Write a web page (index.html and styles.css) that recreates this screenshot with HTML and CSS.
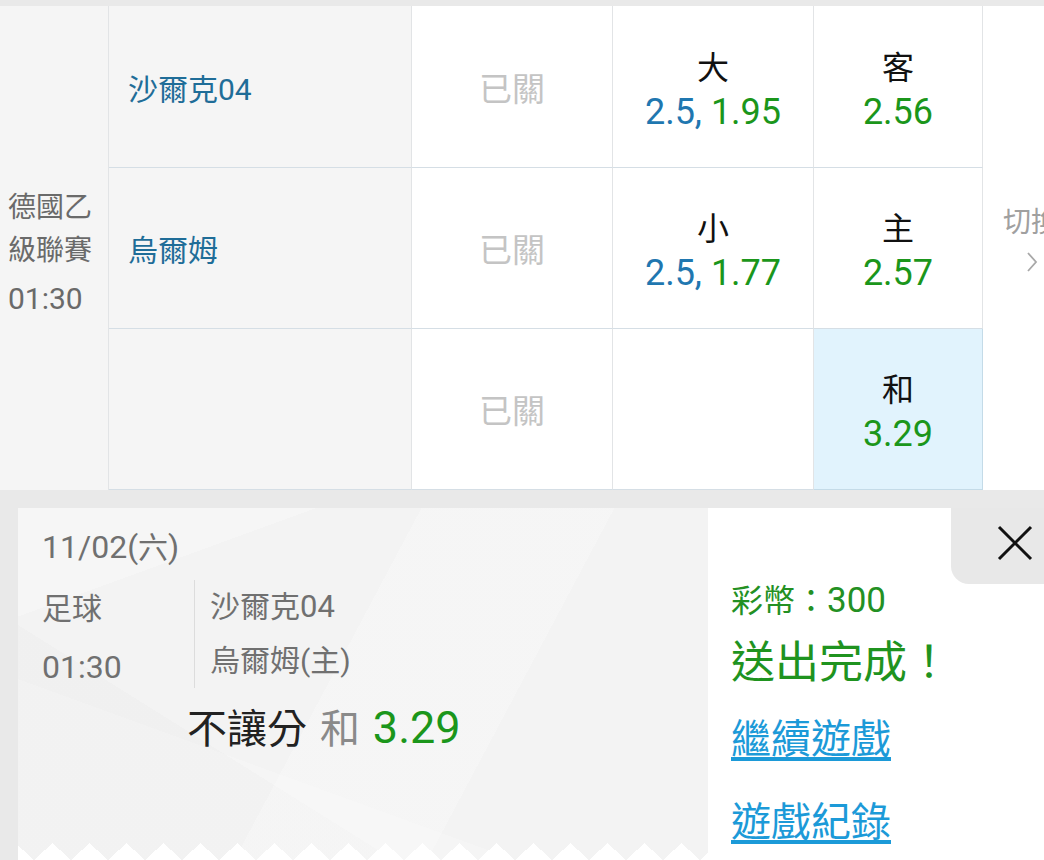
FILE: index.html
```html
<!DOCTYPE html>
<html lang="zh-Hant">
<head>
  <meta charset="UTF-8" />
  <meta name="viewport" content="width=device-width, initial-scale=1.0"/>
  <title>投注</title>
  <link rel="stylesheet" href="styles.css">
</head>
<body>

  <!-- Odds Board -->
  <div class="board">
    <div class="cell league">
      <div class="league-name">德國乙<br>級聯賽</div>
      <div class="league-time">01:30</div>
    </div>

    <div class="cell switch">
      <div>切換</div>
      <svg class="chev" width="14" height="22" viewBox="0 0 14 22">
        <polyline points="3,2 11,11 3,20" fill="none" stroke="#a8a8a8" stroke-width="1.8"/>
      </svg>
    </div>

    <!-- row 1 -->
    <div class="cell team">沙爾克04</div>
    <div class="cell closed">已關</div>
    <div class="cell odds">
      <div class="label">大</div>
      <div class="value"><span class="blue">2.5,</span> 1.95</div>
    </div>
    <div class="cell odds">
      <div class="label">客</div>
      <div class="value">2.56</div>
    </div>

    <!-- row 2 -->
    <div class="cell team">烏爾姆</div>
    <div class="cell closed">已關</div>
    <div class="cell odds">
      <div class="label">小</div>
      <div class="value"><span class="blue">2.5,</span> 1.77</div>
    </div>
    <div class="cell odds">
      <div class="label">主</div>
      <div class="value">2.57</div>
    </div>

    <!-- row 3 -->
    <div class="cell team"></div>
    <div class="cell closed">已關</div>
    <div class="cell odds"></div>
    <div class="cell odds picked">
      <div class="label">和</div>
      <div class="value">3.29</div>
    </div>
  </div>

  <!-- Bet Slip -->
  <div class="slip">
    <div class="ticket">
      <div class="date"><span class="num">11/02(</span>六<span class="num">)</span></div>
      <div class="match">
        <div class="match-info">
          <div>足球</div>
          <div class="num">01:30</div>
        </div>
        <div class="match-teams">
          <div>沙爾克<span class="num">04</span></div>
          <div>烏爾姆(主)</div>
        </div>
      </div>
      <div class="bet">不讓分 <span class="pick">和</span> <span class="green">3.29</span></div>
    </div>

    <div class="result">
      <div class="coins">彩幣：<span class="amount">300</span></div>
      <div class="done">送出完成！</div>
      <a class="link first" href="#">繼續遊戲</a>
      <a class="link" href="#">遊戲紀錄</a>
    </div>

    <div class="close">
      <svg width="36" height="36" viewBox="0 0 36 36">
        <path d="M2 2 L34 34 M34 2 L2 34" stroke="#111" stroke-width="3"/>
      </svg>
    </div>
  </div>

</body>
</html>
```

FILE: styles.css
```css
html, body {
  margin: 0;
  padding: 0;
  height: 860px;
  overflow: hidden;
}

body {
  font-family: Roboto, "Noto Sans CJK TC", sans-serif;
  background-color: #e9e9e9;
  color: #222;
}

.board {
  margin-top: 6px;
  width: 1103px;
  display: grid;
  grid-template-columns: 109px 303px 201px 201px 169px 120px;
  grid-template-rows: 162px 161px 161px;
  background-color: #fff;
}

.cell {
  box-sizing: border-box;
  border-right: 1px solid #e2e4e6;
  border-bottom: 1px solid #d5dee5;
  display: flex;
  align-items: center;
}

.league {
  grid-column: 1;
  grid-row: 1 / span 3;
  background-color: #f5f5f5;
  border-bottom: none;
  flex-direction: column;
  align-items: flex-start;
  justify-content: center;
  padding: 14px 0 0 8px;
  color: #6a6a6a;
}

.league-name {
  font-size: 28px;
  line-height: 43px;
}

.league-time {
  font-size: 30px;
  line-height: 50px;
  margin-top: 2px;
}

.switch {
  grid-column: 6;
  grid-row: 1 / span 3;
  border: none;
  flex-direction: column;
  align-items: flex-start;
  justify-content: center;
  padding: 0 0 20px 20px;
  color: #a0a0a0;
  font-size: 28px;
  line-height: 40px;
}

.chev {
  margin: 8px 0 0 22px;
}

.team {
  background-color: #f5f5f5;
  padding-left: 19px;
  color: #1f6d98;
  font-size: 30px;
}

.closed {
  justify-content: center;
  color: #c4c4c4;
  font-size: 33px;
}

.odds {
  flex-direction: column;
  justify-content: center;
  padding-top: 6px;
  line-height: 44px;
}

.odds .label {
  color: #111;
  font-size: 32px;
}

.odds .value {
  color: #1b961b;
  font-size: 36px;
}

.blue {
  color: #1f77b0;
}

.picked {
  background-color: #e1f3fd;
  border: 1px solid #c4dbe8;
  border-left: none;
  border-top: none;
}

/* bet slip */
.slip {
  position: relative;
  margin: 18px 0 0 18px;
  height: 352px;
  display: flex;
  background-color: #fff;
}

.ticket {
  position: relative;
  box-sizing: border-box;
  width: 690px;
  padding: 19px 0 0 24px;
  color: #707070;
  font-size: 30px;
  background-color: #f3f3f3;
  background-image:
    linear-gradient(118deg, rgba(255,255,255,0) 46%, rgba(255,255,255,0.22) 46%, rgba(255,255,255,0.22) 68%, rgba(255,255,255,0) 68%),
    linear-gradient(32deg, rgba(0,0,0,0.012) 30%, rgba(255,255,255,0) 30%),
    linear-gradient(160deg, rgba(255,255,255,0.28) 18%, rgba(255,255,255,0) 18%),
    linear-gradient(200deg, rgba(255,255,255,0) 70%, rgba(255,255,255,0.2) 70%);
}

.ticket::after {
  content: "";
  position: absolute;
  left: 0;
  right: 0;
  bottom: 0;
  height: 17px;
  background: conic-gradient(from 133deg at 50% 0, #fff 94deg, rgba(255,255,255,0) 0) 16px 0 / 37px 17px repeat-x;
}

.num {
  font-size: 32px;
}

.date {
  line-height: 40px;
}

.match {
  display: flex;
  margin-top: 12px;
}

.match-info {
  width: 152px;
  line-height: 58px;
}

.match-teams {
  border-left: 1px solid #dcdcdc;
  padding-left: 15px;
  line-height: 54px;
  height: 108px;
}

.match-teams .num {
  font-size: 31px;
}

.bet {
  margin: 7px 0 0 145px;
  font-size: 40px;
  line-height: 50px;
  color: #222;
  word-spacing: 3px;
}

.pick {
  color: #8a8a8a;
}

.green {
  color: #1b961b;
  font-size: 45px;
}

.result {
  flex: 1;
  padding: 71px 0 0 23px;
}

.coins {
  color: #239023;
  font-size: 32px;
  line-height: 44px;
}

.amount {
  font-size: 35px;
}

.done {
  margin-top: 10px;
  color: #1f931f;
  font-size: 44px;
  line-height: 60px;
}

.link {
  display: table;
  margin-top: 27px;
  color: #1c9ad8;
  font-size: 40px;
  line-height: 56px;
  text-decoration: underline;
  text-decoration-thickness: 4px;
  text-underline-offset: 4px;
}

.link.first {
  margin-top: 19px;
}

.close {
  position: absolute;
  top: 0;
  right: 0;
  width: 93px;
  height: 76px;
  background-color: #e8e8e8;
  border-bottom-left-radius: 18px;
  display: flex;
  align-items: center;
  justify-content: center;
  padding: 0 0 6px 34px;
  box-sizing: border-box;
}
```
